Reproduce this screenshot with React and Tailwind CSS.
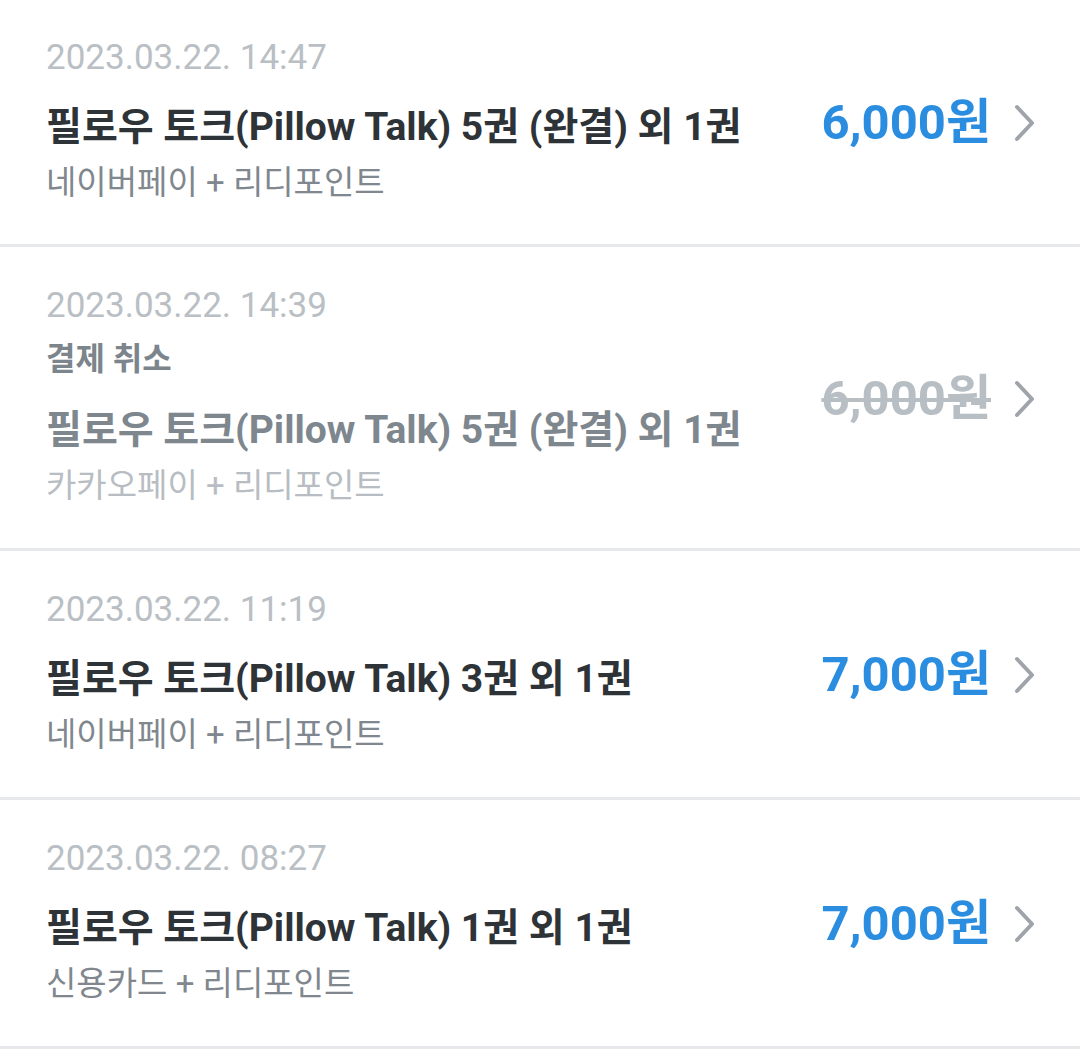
const orders = [
  {
    date: "2023.03.22. 14:47",
    title: "필로우 토크(Pillow Talk) 5권 (완결) 외 1권",
    method: "네이버페이 + 리디포인트",
    price: "6,000원",
  },
  {
    date: "2023.03.22. 14:39",
    title: "필로우 토크(Pillow Talk) 5권 (완결) 외 1권",
    method: "카카오페이 + 리디포인트",
    price: "6,000원",
    canceled: true,
  },
  {
    date: "2023.03.22. 11:19",
    title: "필로우 토크(Pillow Talk) 3권 외 1권",
    method: "네이버페이 + 리디포인트",
    price: "7,000원",
  },
  {
    date: "2023.03.22. 08:27",
    title: "필로우 토크(Pillow Talk) 1권 외 1권",
    method: "신용카드 + 리디포인트",
    price: "7,000원",
  },
];

const Chevron = () => (
  <svg width="24" height="40" viewBox="0 0 24 40" fill="none" className="shrink-0">
    <path
      d="M4 4 L19 20 L4 36"
      stroke="#9ea4aa"
      strokeWidth="4"
      strokeLinecap="round"
      strokeLinejoin="round"
    />
  </svg>
);

const OrderRow = ({ order, first }) => {
  const canceled = !!order.canceled;
  return (
    <div
      className={`flex items-center pl-[46px] pr-[43px] border-b-[3px] border-[#e6e8eb] ${
        first ? "pt-[33px] pb-[37px]" : "pt-[34px] pb-[38px]"
      }`}
    >
      <div className="flex flex-col flex-1 min-w-0">
        <div className="text-[35px] leading-[50px] text-[#b9bfc4]">
          {order.date}
        </div>
        {canceled && (
          <div className="mt-[6px] text-[32px] leading-[44px] font-bold text-[#7d858c]">
            결제 취소
          </div>
        )}
        <div
          className={`${canceled ? "mt-[21px]" : "mt-[16px]"} text-[39px] leading-[56px] font-bold whitespace-nowrap ${
            canceled ? "text-[#7e868e]" : "text-[#2e3338]"
          }`}
        >
          {order.title}
        </div>
        <div
          className={`mt-[4px] text-[33px] leading-[48px] ${
            canceled ? "text-[#b7bdc2]" : "text-[#80878e]"
          }`}
        >
          {order.method}
        </div>
      </div>
      <div className="flex items-center gap-[22px] mt-[6px]">
        <span
          className={`text-[49px] leading-[56px] font-bold ${
            canceled ? "text-[#b7bec4] line-through decoration-[4px]" : "text-[#2a8de0]"
          }`}
        >
          {order.price}
        </span>
        <Chevron />
      </div>
    </div>
  );
};

export default function App() {
  return (
    <div
      className="w-[1080px] h-[1051px] bg-white overflow-hidden"
      style={{ fontFamily: 'Roboto, "Noto Sans CJK KR", sans-serif' }}
    >
      {orders.map((order, i) => (
        <OrderRow key={i} order={order} first={i === 0} />
      ))}
    </div>
  );
}
